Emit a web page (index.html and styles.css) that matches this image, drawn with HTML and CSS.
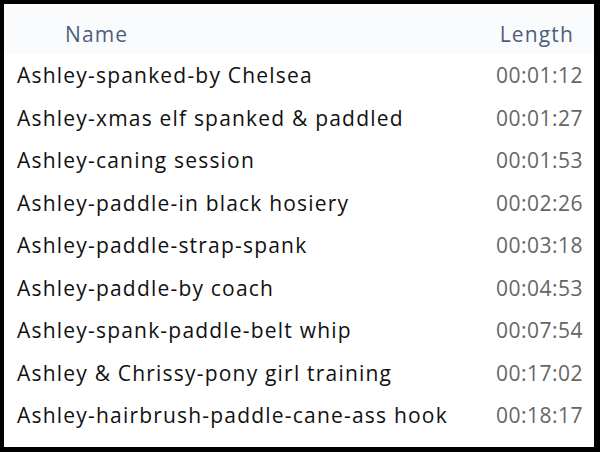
FILE: index.html
```html
<!DOCTYPE html>
<html lang="en">
<head>
  <meta charset="UTF-8" />
  <title>Clips</title>
  <link rel="stylesheet" href="styles.css">
</head>
<body>
  <div class="list-box">
    <div class="list-head">
      <span class="col-name">Name</span>
      <span class="col-length">Length</span>
    </div>

    <!-- rows -->
    <div class="row"><span class="name">Ashley-spanked-by Chelsea</span><span class="time">00:01:12</span></div>
    <div class="row"><span class="name">Ashley-xmas elf spanked &amp; paddled</span><span class="time">00:01:27</span></div>
    <div class="row"><span class="name">Ashley-caning session</span><span class="time">00:01:53</span></div>
    <div class="row"><span class="name">Ashley-paddle-in black hosiery</span><span class="time">00:02:26</span></div>
    <div class="row"><span class="name">Ashley-paddle-strap-spank</span><span class="time">00:03:18</span></div>
    <div class="row"><span class="name">Ashley-paddle-by coach</span><span class="time">00:04:53</span></div>
    <div class="row"><span class="name">Ashley-spank-paddle-belt whip</span><span class="time">00:07:54</span></div>
    <div class="row"><span class="name">Ashley &amp; Chrissy-pony girl training</span><span class="time">00:17:02</span></div>
    <div class="row"><span class="name">Ashley-hairbrush-paddle-cane-ass hook</span><span class="time">00:18:17</span></div>
  </div>
</body>
</html>
```

FILE: styles.css
```css
html, body {
  margin: 0;
  background: #000;
}

body {
  font-family: "Open Sans", "Noto Sans", sans-serif;
  width: 600px;
  height: 452px;
  box-sizing: border-box;
  padding: 4px 6px 5px 4px;
}

.list-box {
  background: #fff;
  height: 100%;
}

.list-head {
  display: flex;
  justify-content: space-between;
  align-items: center;
  height: 50px;
  box-sizing: border-box;
  padding: 9px 20px 0 61px;
  background: #fafbfc;
  color: #4e5f7c;
  font-size: 21px;
  letter-spacing: 1.15px;
}

.row {
  display: flex;
  justify-content: space-between;
  align-items: center;
  height: 42.5px;
  font-size: 21px;
  padding: 0 11px 0 13px;
}

.row .name {
  color: #111;
  letter-spacing: 1.2px;
}

.row .time {
  color: #666;
  letter-spacing: 0.5px;
}
```
